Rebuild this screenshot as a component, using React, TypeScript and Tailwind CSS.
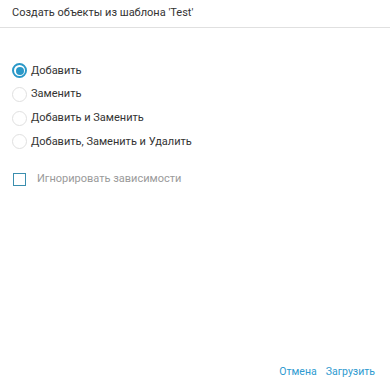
import React, { useState } from "react";

const options = [
  "Добавить",
  "Заменить",
  "Добавить и Заменить",
  "Добавить, Заменить и Удалить",
];

export default function App() {
  const [sel, setSel] = useState(0);
  const [ign, setIgn] = useState(false);
  return (
    <div
      className="w-[390px] h-[390px] bg-white flex flex-col text-[11px] text-[#333]"
      style={{ fontFamily: "Roboto, 'Noto Sans', sans-serif" }}
    >
      <div className="h-[28px] flex items-center pl-[12px] border-b border-[#e0e0e0] shrink-0">
        Создать объекты из шаблона 'Test'
      </div>
      <div className="flex flex-col pt-[31px] pl-[12px]">
        {options.map((o, i) => (
          <label
            key={o}
            className="flex items-center h-[23.7px] cursor-pointer"
            onClick={() => setSel(i)}
          >
            {sel === i ? (
              <span className="w-[15px] h-[15px] rounded-full border-2 border-[#2a98c8] flex items-center justify-center">
                <span className="w-[8px] h-[8px] rounded-full bg-[#2a98c8]" />
              </span>
            ) : (
              <span className="w-[15px] h-[15px] rounded-full border border-[#e0e0e0]" />
            )}
            <span className="ml-[4px]">{o}</span>
          </label>
        ))}
        <label
          className="flex items-center h-[24px] mt-[13.5px] pl-[1px] cursor-pointer"
          onClick={() => setIgn(!ign)}
        >
          <span className="w-[13px] h-[13px] border-[1.5px] border-[#3b8eae]" />
          <span className="ml-[11px] text-[#9a9a9a]">Игнорировать зависимости</span>
        </label>
      </div>
      <div className="flex-1" />
      <div className="flex justify-end items-center gap-[9px] pr-[15px] pb-[10px] text-[10.5px] text-[#2e9ad0]">
        <span>Отмена</span>
        <span>Загрузить</span>
      </div>
    </div>
  );
}
